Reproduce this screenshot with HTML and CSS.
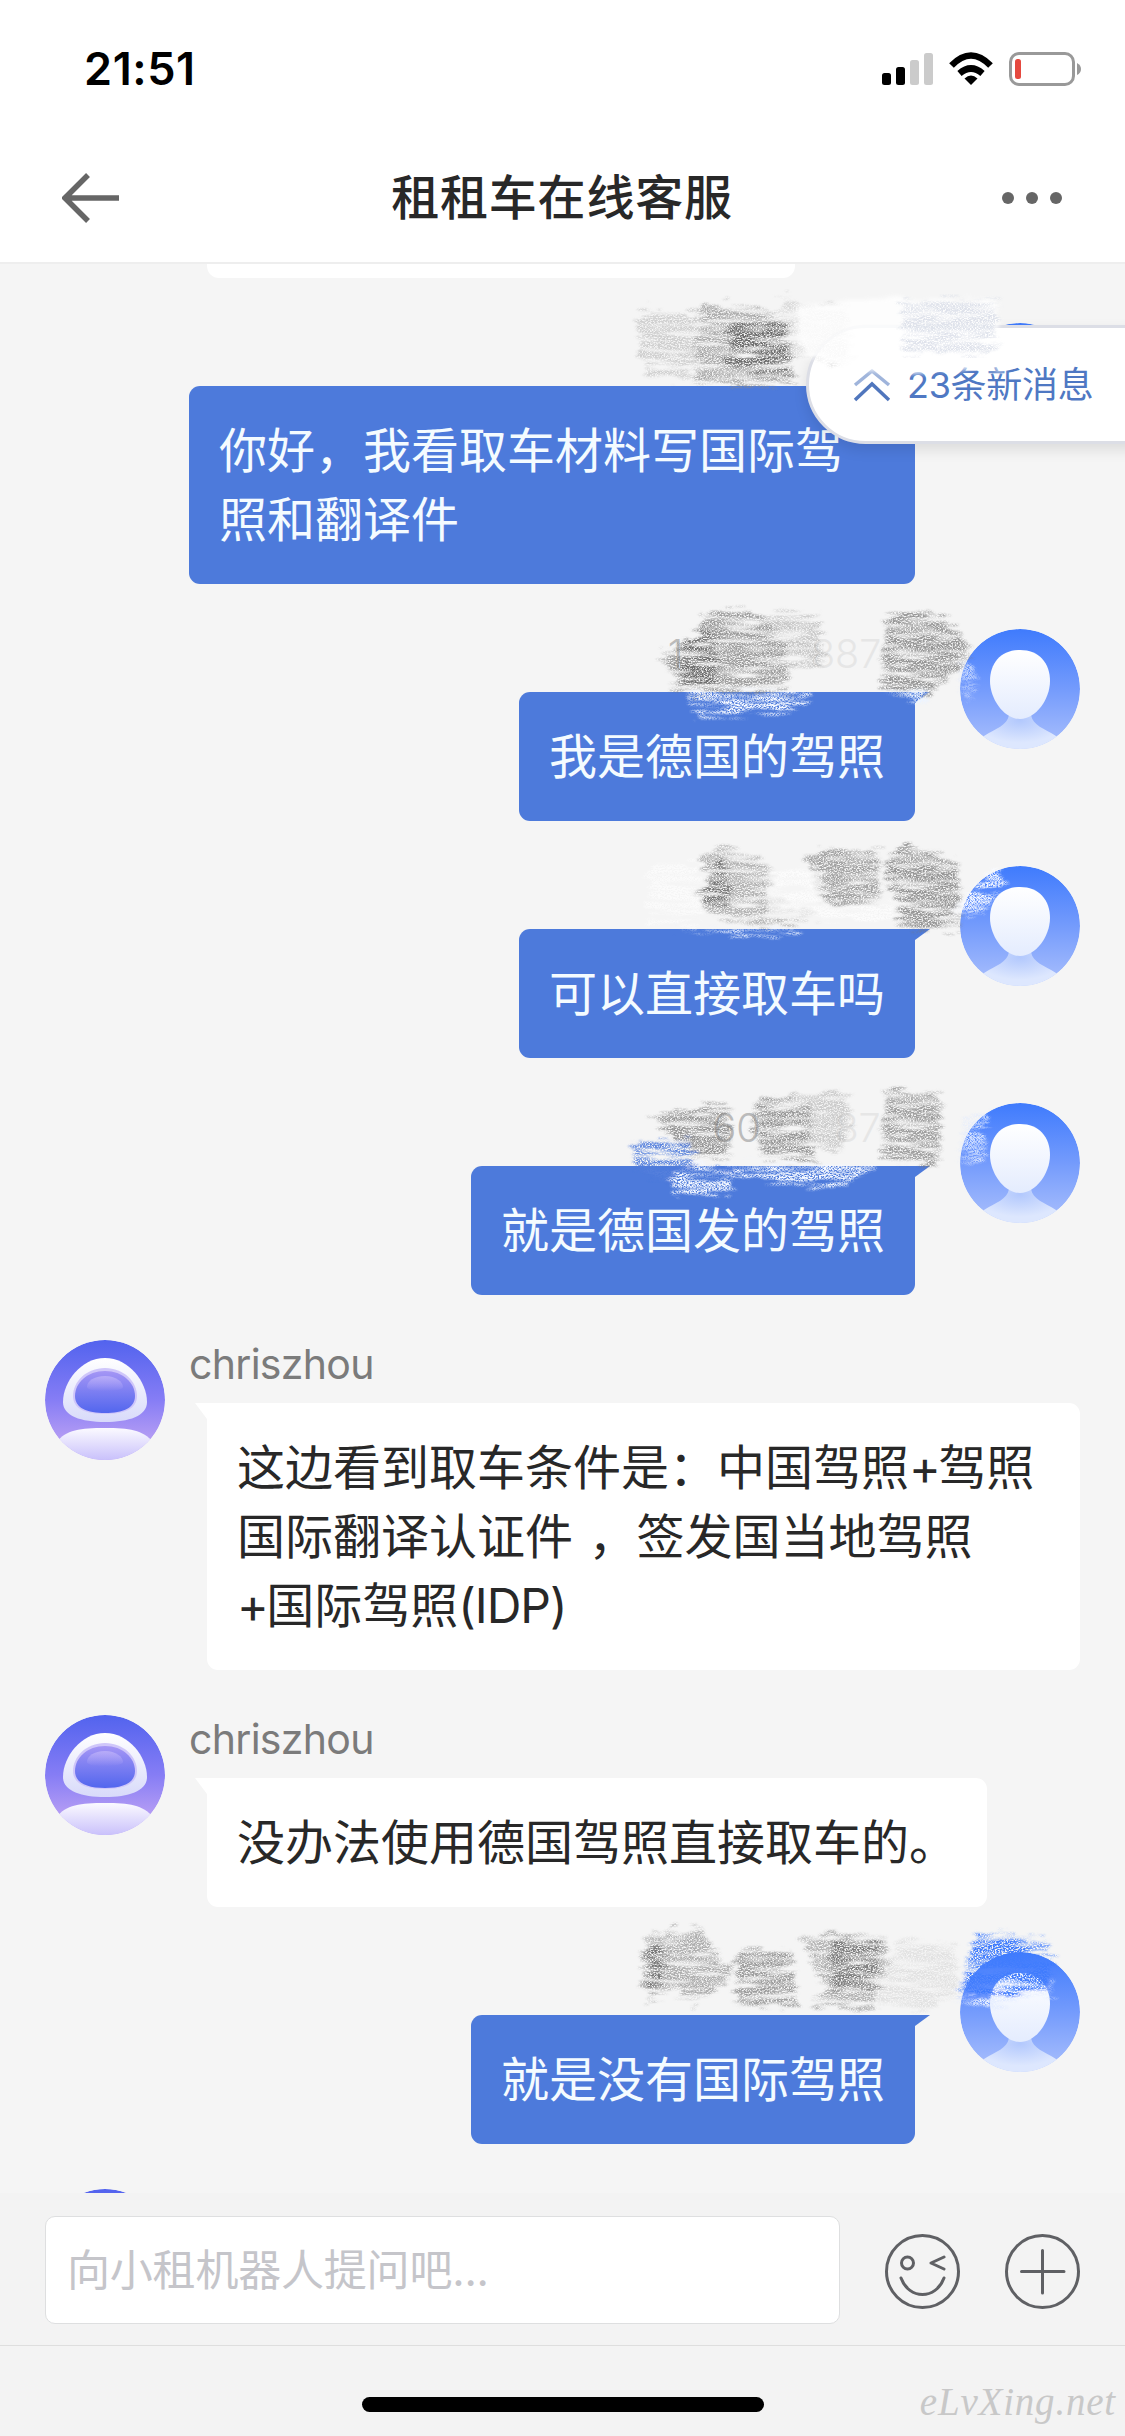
FILE: index.html
```html
<!DOCTYPE html>
<html lang="zh-CN">
<head>
<meta charset="utf-8">
<title>租租车在线客服</title>
<link rel="stylesheet" href="styles.css">
</head>
<body>
<svg class="defs" width="0" height="0" aria-hidden="true">
  <defs>
    <linearGradient id="userBg" x1="0" y1="0" x2="0" y2="1"><stop offset="0" stop-color="#3f7bfd"/><stop offset=".5" stop-color="#749bfc"/><stop offset="1" stop-color="#abc0fc"/></linearGradient>
    <linearGradient id="userFace" x1="0" y1="0" x2="0" y2="1"><stop offset="0" stop-color="#fff"/><stop offset="1" stop-color="#e4ecfe"/></linearGradient>
    <radialGradient id="userBody" cx=".5" cy=".15" r=".62"><stop offset="0" stop-color="#b2c8fd"/><stop offset="1" stop-color="#dde7fe"/></radialGradient>
    <linearGradient id="botBg" x1="0" y1="0" x2="0" y2="1"><stop offset="0" stop-color="#5263ee"/><stop offset=".5" stop-color="#867df5"/><stop offset=".8" stop-color="#b19af4"/></linearGradient>
    <linearGradient id="botHead" x1="0" y1="0" x2="0" y2="1"><stop offset="0" stop-color="#fff"/><stop offset="1" stop-color="#d8dafa"/></linearGradient>
    <linearGradient id="botFace" x1="0" y1="0" x2="0" y2="1"><stop offset="0" stop-color="#a596f5"/><stop offset="1" stop-color="#5266ee"/></linearGradient>
    <linearGradient id="botShine" x1="0" y1="0" x2="0" y2="1"><stop offset="0" stop-color="#c4b8fa"/><stop offset="1" stop-color="#c4b8fa" stop-opacity="0"/></linearGradient>
    <linearGradient id="botBody" x1="0" y1="0" x2="0" y2="1"><stop offset="0" stop-color="#fbfaff"/><stop offset="1" stop-color="#c6bdfb"/></linearGradient>
    <clipPath id="disc"><circle cx="60" cy="60" r="60"/></clipPath>
    <filter id="pencil" x="-10%" y="-10%" width="120%" height="120%">
      <feTurbulence type="fractalNoise" baseFrequency=".012 .09" numOctaves="3" seed="4" result="wave"/>
      <feDisplacementMap in="SourceGraphic" in2="wave" scale="75" xChannelSelector="R" yChannelSelector="G" result="rough"/>
      <feGaussianBlur in="rough" stdDeviation="3" result="soft"/>
      <feTurbulence type="fractalNoise" baseFrequency=".2 .32" numOctaves="2" seed="9" result="fine"/>
      <feColorMatrix values="0 0 0 0 0  0 0 0 0 0  0 0 0 0 0  3.6 0 0 0 -1.1" result="grain"/>
      <feTurbulence type="fractalNoise" baseFrequency=".008 .05" numOctaves="2" seed="21"/>
      <feColorMatrix values="0 0 0 0 0  0 0 0 0 0  0 0 0 0 0  3 0 0 0 -.65" result="bands"/>
      <feComposite in="grain" in2="bands" operator="in" result="mask"/>
      <feComposite in="soft" in2="mask" operator="in"/>
    </filter>
    <filter id="chalk" x="-10%" y="-10%" width="120%" height="120%">
      <feTurbulence type="fractalNoise" baseFrequency=".012 .07" numOctaves="2" seed="2" result="wave"/>
      <feDisplacementMap in="SourceGraphic" in2="wave" scale="45" xChannelSelector="R" yChannelSelector="G" result="rough"/>
      <feGaussianBlur in="rough" stdDeviation="7"/>
    </filter>
    <symbol id="user" viewBox="0 0 120 120">
      <g clip-path="url(#disc)">
        <circle cx="60" cy="60" r="60" fill="url(#userBg)"/>
        <path d="M24 107C36 99 47 97 49 86H71C73 97 84 99 96 107V122H24Z" fill="url(#userBody)"/>
        <path d="M60 21C79 21 90 34 90 52C90 70 76 90 60 90S30 70 30 52C30 34 41 21 60 21Z" fill="url(#userFace)"/>
      </g>
    </symbol>
    <symbol id="bot" viewBox="0 0 120 120">
      <g clip-path="url(#disc)">
        <circle cx="60" cy="60" r="60" fill="url(#botBg)"/>
        <path d="M60 18C84 18 102 42 102 62C102 76 84 82 60 82S18 76 18 62C18 42 36 18 60 18Z" fill="url(#botHead)"/>
        <path d="M60 28C79 28 92 42 92 56C92 69 79 74 60 74S28 69 28 56C28 42 41 28 60 28Z" fill="#cfc6fa"/>
        <path d="M60 31C78 31 90 43 90 56C90 68 78 73 60 73S30 68 30 56C30 43 42 31 60 31Z" fill="url(#botFace)"/>
        <path d="M60 36C71 36 78 42 78 47S42 53 42 47S49 36 60 36Z" fill="url(#botShine)" opacity=".7"/>
        <path d="M12 102C20 90 36 88 60 88S98 90 108 102V122H12Z" fill="url(#botBody)"/>
      </g>
    </symbol>
  </defs>
</svg>

<div class="screen">
  <header class="top">
    <div class="status">
      <span class="time">21:51</span>
      <svg class="status-icons" width="200" height="36" viewBox="882 51 200 36">
        <g><rect x="882" y="73" width="9" height="12" rx="2.5"/><rect x="896" y="67" width="9" height="18" rx="2.5"/><rect x="910" y="60" width="9" height="25" rx="2.5" fill="#cbcbcb"/><rect x="924" y="53" width="9" height="32" rx="2.5" fill="#cbcbcb"/></g>
        <path d="M971 85L964.5 78.5Q971 72.500 977.500 78.500Z"/>
        <path d="M959.500 73.500Q971 63.500 982.500 73.500" fill="none" stroke="#000" stroke-width="6.500"/>
        <path d="M951.500 65.500Q971 45.500 990.500 65.500" fill="none" stroke="#000" stroke-width="6.500"/>
        <rect x="1010.500" y="53.500" width="63" height="31" rx="8.500" fill="none" stroke="#999" stroke-width="3"/>
        <path d="M1077 63Q1081 65 1081 69T1077 75Z" fill="#999"/>
        <rect x="1015" y="59" width="6" height="20" rx="2.500" fill="#e5493f"/>
      </svg>
    </div>
    <nav class="nav">
      <svg class="back" width="58" height="52" viewBox="0 0 58 52"><path d="M57 26H4M26 3L3 26L26 49" fill="none" stroke="#666" stroke-width="5.500"/></svg>
      <h1 class="title">租租车在线客服</h1>
      <svg class="more" width="62" height="14" viewBox="0 0 62 14" fill="#666"><circle cx="7" cy="7" r="6"/><circle cx="31" cy="7" r="6"/><circle cx="55" cy="7" r="6"/></svg>
    </nav>
  </header>

  <main class="chat">
    <div class="previous"></div>

    <section class="row mine first">
      <div class="body"><div class="name"></div><div class="bubble tail-right">你好，我看取车材料写国际驾<br>照和翻译件</div></div>
      <svg class="avatar"><use href="#user"/></svg>
      <svg class="scribble s1" viewBox="0 0 1568 600">
        <g filter="url(#pencil)">
          <path d="M120 120L300 130L310 250L240 330L150 320L110 210Z" fill="#aaa" opacity=".5"/>
          <path d="M310 100L560 130L580 330L430 350L280 330Z" fill="#888" opacity=".65"/>
          <path d="M390 150L560 170L560 310L380 285Z" fill="#6c6c6c" opacity=".95"/>
          <path d="M540 85L740 120V290L570 260Z" fill="#bbb" opacity=".45"/>
        </g>
        <path d="M590 110L850 85L1190 95V250L1210 295L740 310L590 235Z" fill="#fff" opacity=".85" filter="url(#chalk)"/>
        <path d="M900 90H1185V245H900Z" fill="#d3d8e4" opacity=".7" filter="url(#pencil)"/>
      </svg>
    </section>

    <section class="row mine">
      <div class="body"><div class="name"></div><div class="bubble tail-right">我是德国的驾照</div></div>
      <svg class="avatar"><use href="#user"/></svg>
      <svg class="scribble s2" viewBox="0 0 1568 600">
        <text x="202" y="234" class="digits dark">1</text><text x="630" y="234" class="digits">887</text>
        <g filter="url(#pencil)">
          <path d="M290 65L460 62L555 150L560 300H320L235 300L180 200L300 130Z" fill="#777" opacity=".7"/>
          <path d="M250 145L345 130V285L300 330L240 270Z" fill="#666" opacity=".85"/>
          <path d="M480 80L650 70L670 220L560 235L380 110Z" fill="#999" opacity=".5"/>
          <path d="M850 80L975 60L1080 130L1110 205L960 330L840 290Z" fill="#777" opacity=".75"/>
          <path d="M255 308L490 305L630 315V342L505 362L300 378Z" fill="#f4f8ff"/>
          <path d="M850 302L980 300L970 335L940 330Z" fill="#edf4ff"/>
          <path d="M1080 218L1110 225V340L1080 300Z" fill="#dbe6ff" opacity=".8"/>
        </g>
      </svg>
    </section>

    <section class="row mine">
      <div class="body"><div class="name"></div><div class="bubble tail-right">可以直接取车吗</div></div>
      <svg class="avatar"><use href="#user"/></svg>
      <svg class="scribble s3" viewBox="0 0 1568 600">
        <g filter="url(#pencil)">
          <path d="M145 130H300V310H145Z" fill="#fff" opacity=".6"/>
          <path d="M370 80L520 140L500 230L650 290L510 318L300 275L330 200L300 120Z" fill="#888" opacity=".6"/>
          <path d="M360 100L385 160L385 260L300 240Z" fill="#666" opacity=".8"/>
          <path d="M670 90L830 95L835 255L660 245L610 100Z" fill="#777" opacity=".65"/>
          <path d="M840 130L915 65L1070 130L1080 320L900 318L870 220Z" fill="#777" opacity=".75"/>
          <path d="M500 150L660 140L670 255L890 240V300L500 290Z" fill="#fff" opacity=".7"/>
          <path d="M1060 275L1080 240L1170 145L1220 175L1165 250L1140 275L1060 285Z" fill="#f8faff"/>
          <path d="M1080 245L1170 155L1210 180L1160 245L1080 275Z" fill="#f8faff"/>
          <path d="M210 325H600L590 338L400 345Z" fill="#edf4ff" opacity=".8"/>
        </g>
      </svg>
    </section>

    <section class="row mine">
      <div class="body"><div class="name"></div><div class="bubble tail-right">就是德国发的驾照</div></div>
      <svg class="avatar"><use href="#user"/></svg>
      <svg class="scribble s4" viewBox="0 0 1568 600">
        <text x="336" y="244" class="digits dark">60</text><text x="700" y="244" class="digits">87</text>
        <g filter="url(#pencil)">
          <path d="M165 170L380 125L390 285L260 300L220 240Z" fill="#777" opacity=".75"/>
          <path d="M470 110L630 130V290L660 310L480 285L460 170Z" fill="#777" opacity=".75"/>
          <path d="M560 95L735 105L750 200L710 275L630 260Z" fill="#aaa" opacity=".55"/>
          <path d="M850 88L1015 105V310L840 292Z" fill="#777" opacity=".68"/>
          <path d="M95 245H270L290 320H400L380 390L240 405L110 310Z" fill="#5580dc" opacity=".95"/>
          <path d="M200 345L290 305L395 345V395L220 400Z" fill="#f4f8ff"/>
          <path d="M390 315H815L795 350L650 380L540 358L390 338Z" fill="#f4f8ff"/>
          <path d="M1085 180L1157 160L1145 300L1080 305Z" fill="#dfe9ff" opacity=".9"/>
        </g>
      </svg>
    </section>

    <section class="row agent">
      <svg class="avatar"><use href="#bot"/></svg>
      <div class="body"><div class="name"><span class="nick">chriszhou</span></div><div class="bubble tail-left wide">这边看到取车条件是：中国驾照<span class="plus">+</span>驾照<br>国际翻译认证件<span class="gap"> </span>，签发国当地驾照<br><span class="plus">+</span>国际驾照<span class="idp">(IDP)</span></div></div>
    </section>

    <section class="row agent">
      <svg class="avatar"><use href="#bot"/></svg>
      <div class="body"><div class="name"><span class="nick">chriszhou</span></div><div class="bubble tail-left">没办法使用德国驾照直接取车的。</div></div>
    </section>

    <section class="row mine">
      <div class="body"><div class="name"></div><div class="bubble tail-right">就是没有国际驾照</div></div>
      <svg class="avatar"><use href="#user"/></svg>
      <svg class="scribble s5" viewBox="0 0 1568 600">
        <g filter="url(#pencil)">
          <path d="M150 100L200 110L220 72L245 110L280 70L390 205L370 260L275 310L230 270L150 300L120 195Z" fill="#888" opacity=".65"/>
          <path d="M140 120L190 140L185 210L155 300Z" fill="#666" opacity=".85"/>
          <path d="M415 145L575 160L590 315L415 310L405 240Z" fill="#777" opacity=".7"/>
          <path d="M590 105L845 110L860 190L830 270L800 330L630 320L680 270Z" fill="#888" opacity=".6"/>
          <path d="M685 120H835L825 270H700Z" fill="#6c6c6c" opacity=".75"/>
          <path d="M890 115L1060 130L1070 285L990 320L820 315Z" fill="#ccc" opacity=".45"/>
          <path d="M1115 180L1330 180L1350 240L1340 280L1160 320L1075 300L1085 230Z" fill="#e5edff"/>
          <path d="M1115 95L1330 120L1350 190L1340 270L1160 290L1075 285L1100 180Z" fill="#3f7bfd"/>
        </g>
      </svg>
    </section>

    <section class="row agent">
      <svg class="avatar"><use href="#bot"/></svg>
    </section>

    <div class="unread">
      <svg width="40" height="36" viewBox="0 0 40 36" fill="none" stroke="#5076bd" stroke-width="3.500"><path d="M3 18L20 4L37 18" opacity=".55"/><path d="M3 33L20 17L37 33"/></svg>
      <span>23条新消息</span>
    </div>
  </main>

  <footer class="footer">
    <div class="composer">
      <div class="input">向小租机器人提问吧...</div>
      <svg class="tool" viewBox="0 0 75 75"><circle cx="37.500" cy="37.500" r="36"/><circle cx="22.500" cy="29" r="6"/><path d="M59 23L46 29L59 35M16 44C24 66 51 66 59 44"/></svg>
      <svg class="tool" viewBox="0 0 75 75"><circle cx="37.500" cy="37.500" r="36"/><path d="M16.500 37.500H59M37.500 16.500V59"/></svg>
    </div>
    <div class="home">
      <div class="indicator"></div>
      <div class="watermark">eLvXing.net</div>
    </div>
  </footer>
</div>
</body>
</html>
```
FILE: styles.css
```css
* { box-sizing: border-box; }

body {
  margin: 0;
  background: #f5f5f5;
  font-family: Inter, "Noto Sans CJK SC", sans-serif;
  color: #282828;
}

.defs { position: absolute; }

.screen {
  width: 1125px;
  height: 2436px;
  display: flex;
  flex-direction: column;
  overflow: hidden;
}

.top {
  height: 264px;
  background: #fff;
  border-bottom: 2px solid #eee;
}

.status {
  height: 132px;
  padding: 0 43px 0 84px;
  display: flex;
  align-items: center;
  justify-content: space-between;
}

.time {
  font-size: 45px;
  font-weight: 600;
  line-height: 54px;
  letter-spacing: .6px;
  color: #000;
  padding-top: 6px;
}

.status-icons { margin-top: 6px; }

.nav {
  height: 132px;
  padding: 0 62px;
  display: flex;
  align-items: center;
  justify-content: space-between;
}

.title {
  margin: 0;
  padding-left: 3px;
  font-size: 48px;
  font-weight: 500;
  letter-spacing: .8px;
  line-height: 70px;
}

.chat {
  position: relative;
  height: 1929px;
  overflow: hidden;
  display: flex;
  flex-direction: column;
  gap: 45px;
  background: #f5f5f5;
}

.previous {
  flex: none;
  width: 588px;
  height: 14px;
  margin-left: 207px;
  background: #fff;
  border-radius: 0 0 12px 12px;
}

.row {
  position: relative;
  flex: none;
  display: flex;
  padding: 0 45px;
}

.mine { justify-content: flex-end; gap: 45px; }
.agent { gap: 24px; }

.avatar { flex: none; width: 120px; height: 120px; }

.body { display: flex; flex-direction: column; align-items: flex-start; }

.name {
  height: 63px;
  color: #7b7b7b;
  font-size: 41px;
  line-height: 48px;
}

.nick { letter-spacing: -.7px; }

.bubble {
  position: relative;
  padding: 30px;
  border-radius: 11px;
  font-size: 48px;
  line-height: 69px;
  white-space: nowrap;
}

.mine .bubble { background: #4d7adb; color: #f4fbff; }
.first .bubble { width: 726px; }
.agent .bubble { margin-left: 18px; background: #fff; }
.wide { width: 873px; }
.plus { letter-spacing: -2.5px; }
.gap { letter-spacing: 2px; }
.idp { letter-spacing: -1px; }

.tail-right { border-top-right-radius: 0; }
.tail-left { border-top-left-radius: 0; }

.tail-right::after,
.tail-left::after {
  content: "";
  position: absolute;
  top: 0;
}

.mine .tail-right::after {
  left: 100%;
  width: 15px;
  height: 11px;
  background: #4d7adb;
  clip-path: polygon(0 0, 100% 0, 0 100%);
}

.agent .tail-left::after {
  right: 100%;
  width: 12px;
  height: 16px;
  background: #fff;
  clip-path: polygon(0 0, 100% 0, 100% 100%);
}

.scribble {
  position: absolute;
  left: 600px;
  width: 525px;
  height: 201px;
}

.s1 { top: -53px; z-index: 3; }
.s2 { top: -39px; }
.s3 { top: -46px; }
.s4 { top: -43px; }
.s5 { top: -52px; }

.digits { font-size: 118px; font-weight: 300; fill: #e6e6e6; }
.dark { fill: #bbb; }

.unread {
  position: absolute;
  z-index: 2;
  left: 806px;
  top: 61px;
  width: 340px;
  height: 119px;
  padding-left: 43px;
  display: flex;
  align-items: center;
  gap: 15px;
  border: 3px solid #dcdee6;
  border-radius: 60px 0 0 60px;
  background: #fff;
  box-shadow: 0 6px 14px rgba(0, 0, 0, .1);
  color: #4f78c3;
  font-size: 36px;
  letter-spacing: -.3px;
  line-height: 50px;
  white-space: nowrap;
}

.footer { height: 243px; background: #f3f3f3; }

.composer {
  height: 153px;
  padding: 23px 45px 21px;
  display: flex;
  align-items: center;
  gap: 45px;
  border-bottom: 1px solid #dedede;
}

.input {
  flex: 1;
  height: 108px;
  padding: 0 21px;
  border: 1px solid #dedfe0;
  border-radius: 10px;
  background: #fff;
  color: #c5c5ca;
  font-size: 43px;
  letter-spacing: -.2px;
  line-height: 106px;
}

.tool {
  width: 75px;
  height: 75px;
  margin-top: 2px;
  fill: none;
  stroke: #5f6064;
  stroke-width: 3;
  stroke-linecap: round;
  stroke-linejoin: round;
}

.home {
  height: 90px;
  display: grid;
  grid-template-columns: 362px 402px 1fr;
}

.indicator {
  grid-column: 2;
  height: 15px;
  margin-top: 51px;
  border-radius: 8px;
  background: #000;
}

.watermark {
  padding: 35px 9px 0 0;
  text-align: right;
  font-family: "Liberation Serif", serif;
  font-style: italic;
  font-size: 39px;
  letter-spacing: .8px;
  line-height: 42px;
  color: #c8c8c8;
}
```
